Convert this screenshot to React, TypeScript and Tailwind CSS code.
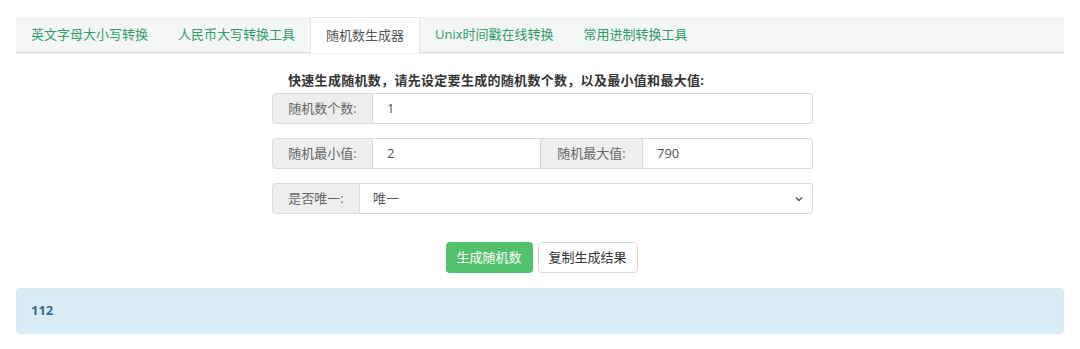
import React, { useState } from 'react'

const tabs = ['英文字母大小写转换', '人民币大写转换工具', '随机数生成器', 'Unix时间戳在线转换', '常用进制转换工具']

const font = { fontFamily: '"Open Sans", "Noto Sans CJK SC", sans-serif' }

const Addon: React.FC<{ label: string; className?: string }> = ({ label, className = '' }) => (
    <span className={`flex items-center justify-center bg-[#eeeeee] border border-[#d9d9d9] text-[13px] text-[#666] ${className}`}>
        {label}
    </span>
)

export default function App() {
    const [active] = useState(2)
    const [count, setCount] = useState('1')
    const [min, setMin] = useState('2')
    const [max, setMax] = useState('790')

    return (
        <div className="w-[1080px] h-[349px] bg-white pt-[17px] px-4" style={font}>
            {/* Tabs */}
            <div className="flex h-9 bg-[#f4f5f5] border-b border-[#dcdcdc] shadow-[0_1px_1px_rgba(0,0,0,0.05)]">
                {tabs.map((t, i) => (
                    <div
                        key={t}
                        className={`flex items-center px-[15px] text-[13px] ${
                            i === active
                                ? 'bg-white text-[#555] border-x border-t border-[#e6e6e6] -mb-px'
                                : 'text-[#2f9d6c]'
                        }`}
                    >
                        {t}
                    </div>
                ))}
            </div>

            {/* Form */}
            <div className="w-[541px] ml-[256px] mt-[18px]">
                <p className="pl-[16px] text-[13px] font-bold text-[#333] leading-[18px] tracking-[0.3px]">
                    快速生成随机数，请先设定要生成的随机数个数，以及最小值和最大值:
                </p>
                <div className="flex h-[31px] mt-[4px]">
                    <Addon label="随机数个数:" className="w-[101px] rounded-l-[4px]" />
                    <input
                        value={count}
                        onChange={(e) => setCount(e.target.value)}
                        className="flex-1 border border-l-0 border-[#d9d9d9] rounded-r-[4px] px-[14px] text-[13px] text-[#555] outline-none"
                    />
                </div>
                <div className="flex h-[31px] mt-[14px]">
                    <Addon label="随机最小值:" className="w-[101px] rounded-l-[4px]" />
                    <input
                        value={min}
                        onChange={(e) => setMin(e.target.value)}
                        className="w-[168px] border border-l-0 border-[#d9d9d9] px-[14px] text-[13px] text-[#555] outline-none"
                    />
                    <Addon label="随机最大值:" className="w-[102px] border-l-0" />
                    <input
                        value={max}
                        onChange={(e) => setMax(e.target.value)}
                        className="flex-1 min-w-0 border border-l-0 border-[#d9d9d9] rounded-r-[4px] px-[14px] text-[13px] text-[#555] outline-none"
                    />
                </div>
                <div className="flex h-[31px] mt-[14px]">
                    <Addon label="是否唯一:" className="w-[88px] rounded-l-[4px]" />
                    <div className="flex-1 flex items-center justify-between border border-l-0 border-[#d9d9d9] rounded-r-[4px] pl-[13px] pr-[8px] text-[13px] text-[#555]">
                        <span>唯一</span>
                        <svg width="10" height="10" viewBox="0 0 10 10" fill="none" stroke="#555" strokeWidth="1.5">
                            <path d="M2 3.5l3 3 3-3" />
                        </svg>
                    </div>
                </div>
                <div className="flex justify-center gap-[5px] mt-[28px] pr-[2px]">
                    <button className="h-[31px] w-[87px] rounded-[4px] bg-[#52c16c] text-white text-[13px]">生成随机数</button>
                    <button className="h-[31px] w-[100px] rounded-[4px] bg-white border border-[#d9d9d9] text-[#333] text-[13px]">
                        复制生成结果
                    </button>
                </div>
            </div>

            {/* Result */}
            <div className="mt-[15px] h-[46px] flex items-center px-[14px] bg-[#d9edf7] border border-[#d3e9f3] rounded-[4px] text-[13px] font-bold text-[#31708f]">
                112
            </div>
        </div>
    )
}
